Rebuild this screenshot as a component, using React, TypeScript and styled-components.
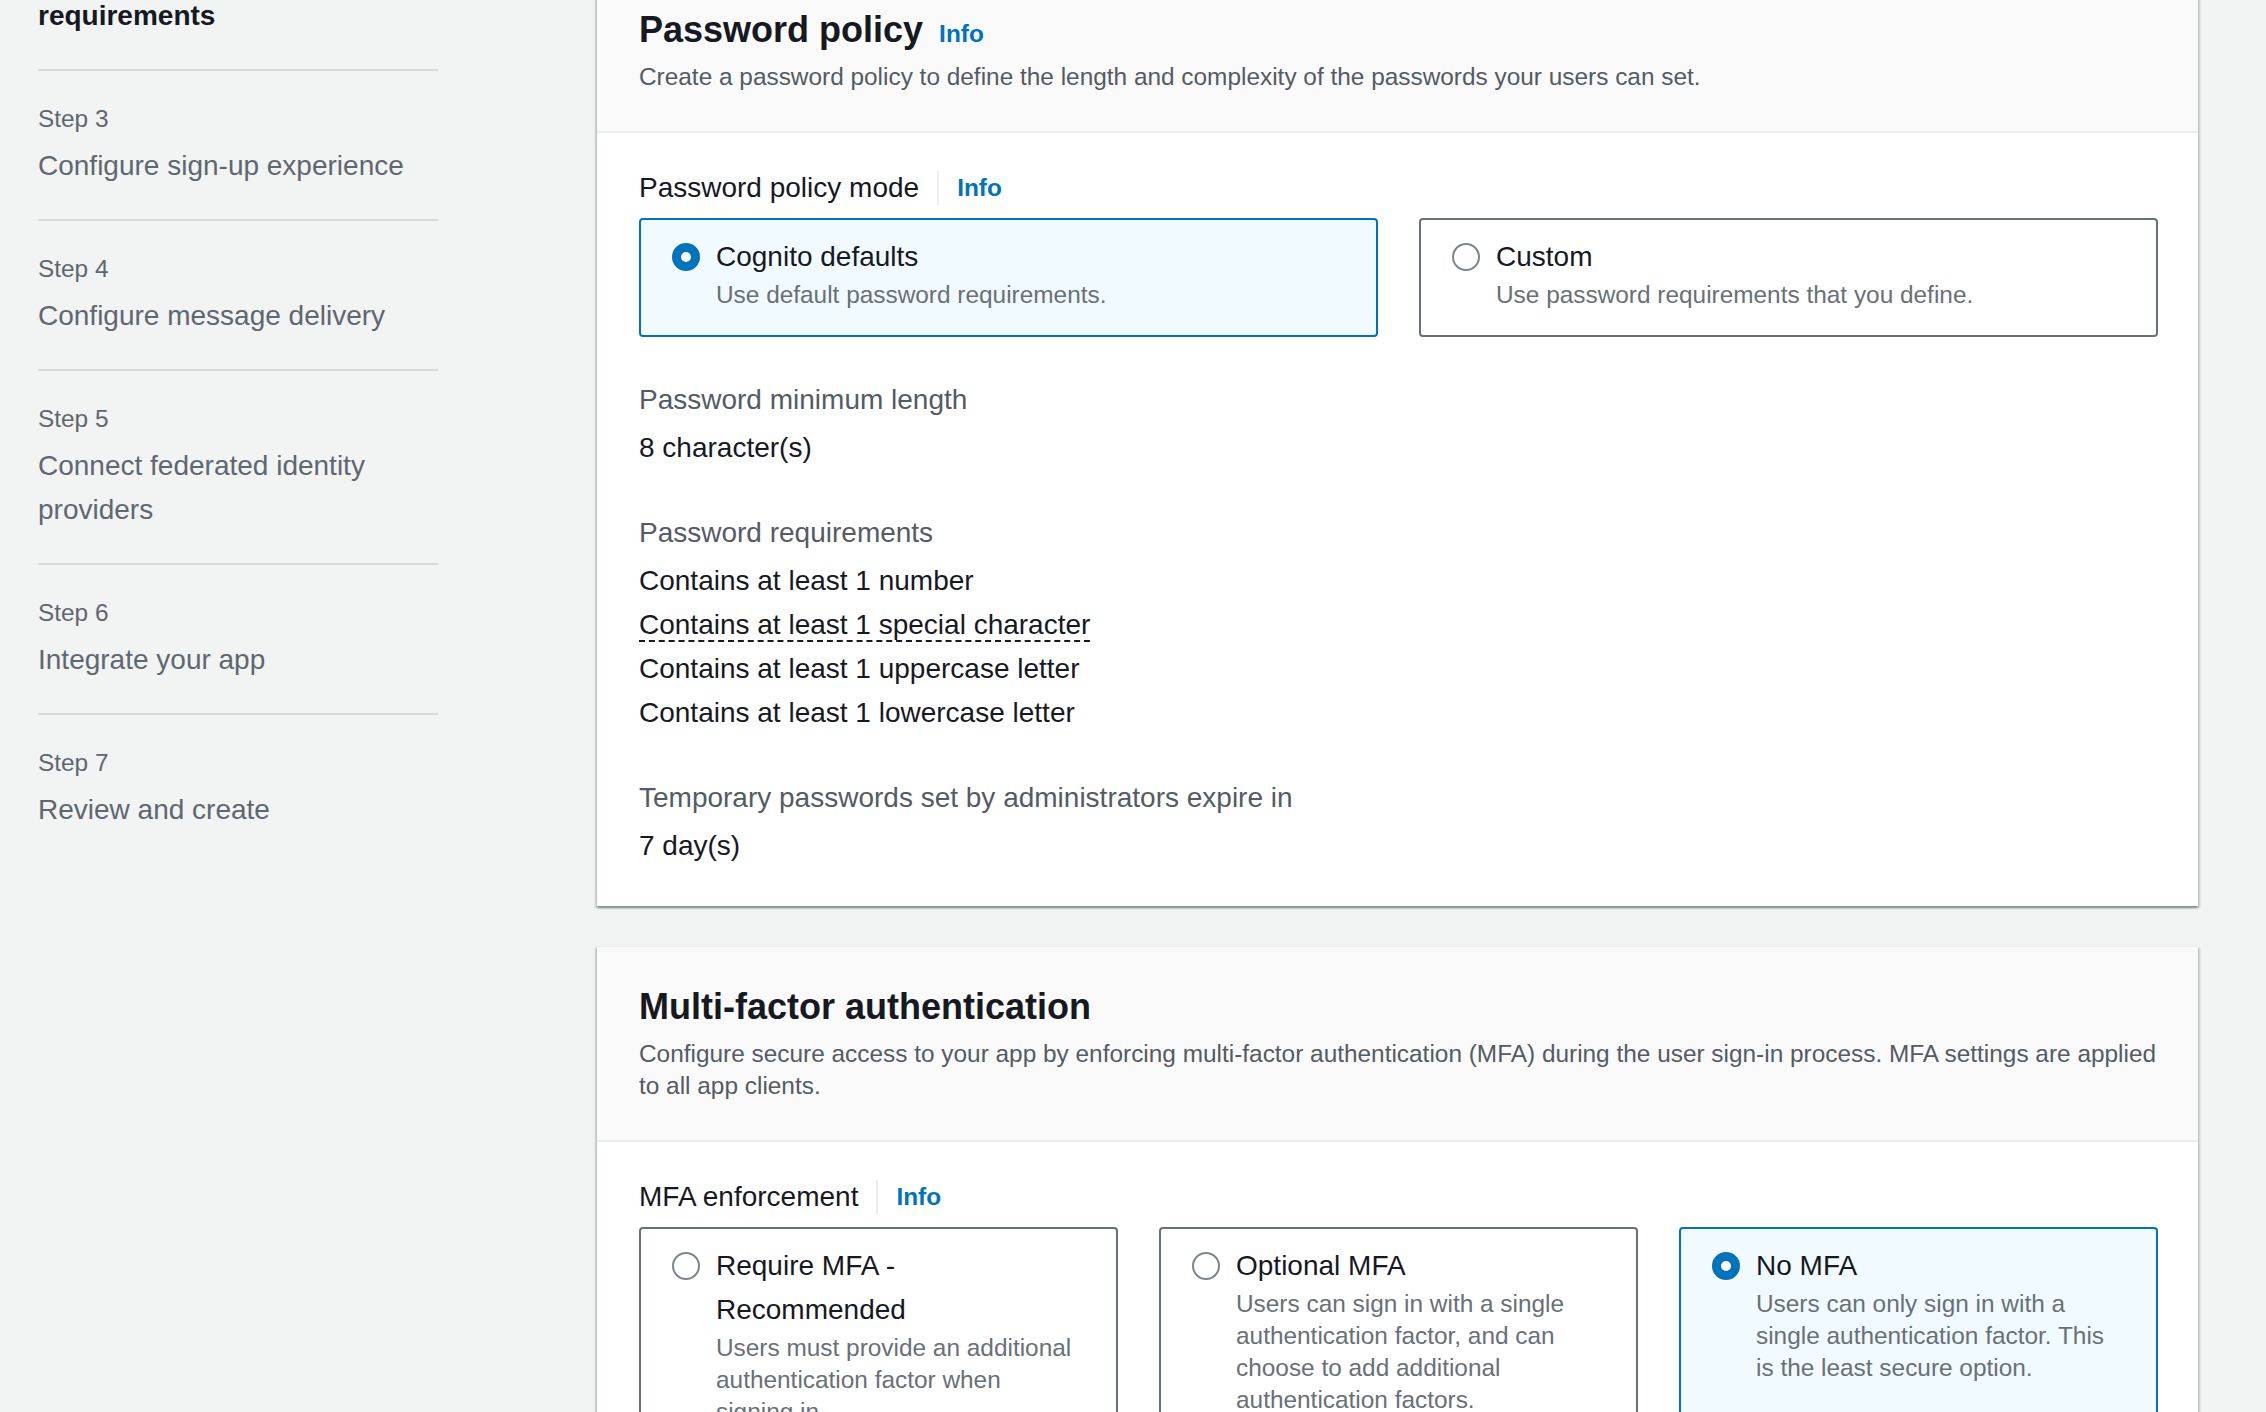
//Library
import React from 'react'
import styled, { createGlobalStyle } from 'styled-components'

interface WizardStep {
    label: string
    title: string
    active?: boolean
}

interface TileOption {
    title: string
    description: string
    selected?: boolean
}

const steps: Array<WizardStep> = [
    { label: 'Step 1', title: 'Configure sign-in experience' },
    { label: 'Step 2', title: 'Configure security requirements', active: true },
    { label: 'Step 3', title: 'Configure sign-up experience' },
    { label: 'Step 4', title: 'Configure message delivery' },
    { label: 'Step 5', title: 'Connect federated identity providers' },
    { label: 'Step 6', title: 'Integrate your app' },
    { label: 'Step 7', title: 'Review and create' },
]

const passwordModes: Array<TileOption> = [
    {
        title: 'Cognito defaults',
        description: 'Use default password requirements.',
        selected: true,
    },
    {
        title: 'Custom',
        description: 'Use password requirements that you define.',
    },
]

const mfaModes: Array<TileOption> = [
    {
        title: 'Require MFA - Recommended',
        description:
            'Users must provide an additional authentication factor when signing in.',
    },
    {
        title: 'Optional MFA',
        description:
            'Users can sign in with a single authentication factor, and can choose to add additional authentication factors.',
    },
    {
        title: 'No MFA',
        description:
            'Users can only sign in with a single authentication factor. This is the least secure option.',
        selected: true,
    },
]

const requirements = [
    { text: 'Contains at least 1 number' },
    { text: 'Contains at least 1 special character', hasTooltip: true },
    { text: 'Contains at least 1 uppercase letter' },
    { text: 'Contains at least 1 lowercase letter' },
]

const Tiles: React.FC<{ options: Array<TileOption> }> = ({ options }) => (
    <TileGrid $columns={options.length}>
        {options.map((option) => (
            <Tile key={option.title} $selected={!!option.selected}>
                <Radio $selected={!!option.selected} />
                <TileTitle>{option.title}</TileTitle>
                <TileDescription>{option.description}</TileDescription>
            </Tile>
        ))}
    </TileGrid>
)

const App: React.FC = () => {
    return (
        <React.Fragment>
            <GlobalStyle />
            <Page>
                <Sidebar>
                    {steps.map((step) => (
                        <StepItem key={step.label}>
                            <StepLabel>{step.label}</StepLabel>
                            <StepTitle $active={!!step.active}>
                                {step.title}
                            </StepTitle>
                        </StepItem>
                    ))}
                </Sidebar>

                <Main>
                    <Container>
                        <ContainerHeader>
                            <HeaderTitleRow>
                                <Heading>Password policy</Heading>
                                <InfoLink href="#">Info</InfoLink>
                            </HeaderTitleRow>
                            <HeaderDescription>
                                Create a password policy to define the length
                                and complexity of the passwords your users can
                                set.
                            </HeaderDescription>
                        </ContainerHeader>
                        <ContainerBody>
                            <FieldLabelRow>
                                Password policy mode
                                <Separator />
                                <InfoLink href="#">Info</InfoLink>
                            </FieldLabelRow>
                            <Tiles options={passwordModes} />

                            <Field>
                                <FieldKey>Password minimum length</FieldKey>
                                <FieldValue>8 character(s)</FieldValue>
                            </Field>
                            <Field>
                                <FieldKey>Password requirements</FieldKey>
                                <RequirementList>
                                    {requirements.map((item) => (
                                        <li key={item.text}>
                                            {item.hasTooltip ? (
                                                <DashedTerm>{item.text}</DashedTerm>
                                            ) : (
                                                item.text
                                            )}
                                        </li>
                                    ))}
                                </RequirementList>
                            </Field>
                            <Field>
                                <FieldKey>
                                    Temporary passwords set by administrators
                                    expire in
                                </FieldKey>
                                <FieldValue>7 day(s)</FieldValue>
                            </Field>
                        </ContainerBody>
                    </Container>

                    <Container>
                        <ContainerHeader>
                            <HeaderTitleRow>
                                <Heading>Multi-factor authentication</Heading>
                            </HeaderTitleRow>
                            <HeaderDescription>
                                Configure secure access to your app by enforcing
                                multi-factor authentication (MFA) during the user
                                sign-in process. MFA settings are applied to all
                                app clients.
                            </HeaderDescription>
                        </ContainerHeader>
                        <ContainerBody>
                            <FieldLabelRow>
                                MFA enforcement
                                <Separator />
                                <InfoLink href="#">Info</InfoLink>
                            </FieldLabelRow>
                            <Tiles options={mfaModes} />
                        </ContainerBody>
                    </Container>
                </Main>
            </Page>
        </React.Fragment>
    )
}

export default App

const GlobalStyle = createGlobalStyle`
    html, body {
        margin: 0;
        background: #f2f3f3;
        overflow: hidden;
    }
    body {
        font-family: 'Liberation Sans', Arial, sans-serif;
        color: #16191f;
    }
    * {
        box-sizing: border-box;
    }
`

const Page = styled.div`
    display: flex;
    align-items: flex-start;
    padding: 0 68px 0 38px;
`

const Sidebar = styled.nav`
    width: 400px;
    flex-shrink: 0;
    margin-top: -273px;
`

const StepItem = styled.div`
    padding: 32px 0 31px;
    border-top: 2px solid #d5dbdb;

    &:first-child {
        border-top: none;
    }
`

const StepLabel = styled.div`
    font-size: 24.4px;
    line-height: 32px;
    color: #5f6770;
    margin-bottom: 9px;
`

const StepTitle = styled.div<{ $active: boolean }>`
    font-size: 28px;
    line-height: 44px;
    font-weight: ${(props) => (props.$active ? 700 : 400)};
    color: ${(props) => (props.$active ? '#16191f' : '#5f6770')};
`

const Main = styled.main`
    flex: 1;
    min-width: 0;
    margin: -31px 0 0 159px;
    display: flex;
    flex-direction: column;
    gap: 40px;
`

const Container = styled.section`
    background: #ffffff;
    border-top: 1px solid #eaeded;
    box-shadow: 0 2px 2px 0 rgba(0, 28, 36, 0.3),
        2px 2px 2px 0 rgba(0, 28, 36, 0.15),
        -2px 2px 2px 0 rgba(0, 28, 36, 0.15);
`

const ContainerHeader = styled.header`
    background: #fafafa;
    padding: 38px 30px 38px 42px;
    border-bottom: 2px solid #eaeded;
`

const HeaderTitleRow = styled.div`
    display: flex;
    align-items: baseline;
    gap: 16px;
`

const Heading = styled.h2`
    margin: 0;
    font-size: 36px;
    line-height: 44px;
    font-weight: 700;
    color: #16191f;
`

const InfoLink = styled.a`
    font-size: 24.4px;
    font-weight: 700;
    color: #0073bb;
    text-decoration: none;
`

const HeaderDescription = styled.p`
    margin: 9px 0 0;
    font-size: 24.4px;
    line-height: 32px;
    color: #545b64;
`

const ContainerBody = styled.div`
    padding: 33px 40px 38px 42px;
`

const FieldLabelRow = styled.div`
    display: flex;
    align-items: center;
    font-size: 28px;
    line-height: 44px;
    color: #16191f;
`

const Separator = styled.span`
    width: 2px;
    height: 34px;
    background: #eaeded;
    margin: 0 18px;
`

const TileGrid = styled.div<{ $columns: number }>`
    display: grid;
    grid-template-columns: repeat(${(props) => props.$columns}, 1fr);
    gap: 41px;
    margin-top: 8px;
`

const Tile = styled.div<{ $selected: boolean }>`
    display: grid;
    grid-template-columns: 28px 1fr;
    column-gap: 16px;
    align-content: start;
    padding: 15px 39px 24px 31px;
    border: 2px solid ${(props) => (props.$selected ? '#0073bb' : '#687078')};
    border-radius: 4px;
    background: ${(props) => (props.$selected ? '#f1faff' : '#ffffff')};
`

const Radio = styled.span<{ $selected: boolean }>`
    grid-row: span 2;
    width: 28px;
    height: 28px;
    margin-top: 8px;
    border-radius: 50%;
    background: #ffffff;
    border: ${(props) =>
        props.$selected ? '9px solid #0073bb' : '2px solid #7d8590'};
`

const TileTitle = styled.div`
    font-size: 28px;
    line-height: 44px;
    color: #16191f;
`

const TileDescription = styled.div`
    font-size: 24.4px;
    line-height: 32px;
    color: #687078;
`

const Field = styled.div`
    margin-top: 41px;
`

const FieldKey = styled.div`
    font-size: 28px;
    line-height: 44px;
    color: #545b64;
`

const FieldValue = styled.div`
    margin-top: 4px;
    font-size: 28px;
    line-height: 44px;
    color: #16191f;
`

const RequirementList = styled.ul`
    list-style: none;
    margin: 4px 0 0;
    padding: 0;
    font-size: 28px;
    line-height: 44px;
    color: #16191f;
`

const DashedTerm = styled.span`
    border-bottom: 2px dashed #16191f;
`
